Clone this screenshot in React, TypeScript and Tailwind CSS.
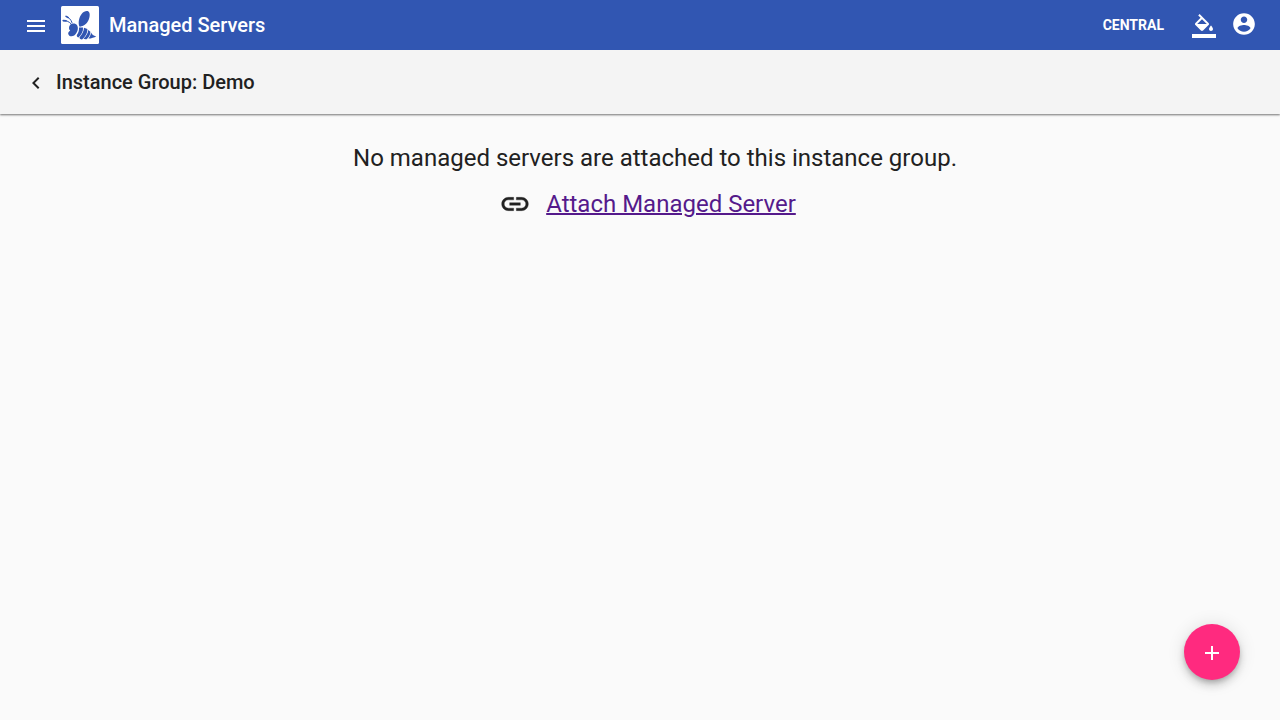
import type { ReactNode } from "react";

function Icon({ className, children }: { className: string; children: ReactNode }) {
  return (
    <svg viewBox="0 0 24 24" fill="currentColor" aria-hidden="true" className={className}>
      {children}
    </svg>
  );
}

function BeeLogo() {
  return (
    <svg viewBox="0 0 38 38" role="img" aria-label="Logo" className="size-[38px] shrink-0">
      <rect width="38" height="38" rx="1.5" fill="#fff" />
      <g fill="#3156b2">
        <path d="M18.4 20.6C17 17 17.8 11.4 20.8 7.8C23 5 26.8 4 28.1 6.2C29.5 8.8 28.4 14 25.3 17.6C23.3 19.8 20.4 20.8 18.4 20.6Z" />
        <path d="M9.2 18.8C11 17 14.8 17.2 16.2 19.6C17.8 22.4 16.4 27.2 13.2 29.6C10.8 31 7.6 30.4 7.2 27.8C7.1 26.4 8 25.4 9.2 24.8C7.6 23.4 7.6 20.6 9.2 18.8Z" />
        <path d="M18 21.6L22 21.6C22.4 25 20.6 29 17.4 31.4C15.8 31 15.4 29.8 16 28.8C17.6 26.6 18.300 24 18 21.6Z" />
        <path d="M23 21.8L26.400 23C26.500 27 24.400 31 21 33.400C19.200 33.200 18.200 32.200 18.600 31.200C21.200 28.600 22.900 25.400 23 21.8Z" />
        <path d="M27.200 24L29.400 25.800C29.400 29 27.800 31.600 25.600 33.200C24.200 33.400 23 33.200 22.600 32.600C25.200 30 27 27.400 27.200 24Z" />
        <path d="M30 26.600C30.800 28.600 32.600 29.800 35.200 30.400C33.400 31.200 30.400 32.400 27.400 32.600C28.800 31 29.800 29 30 26.600Z" />
      </g>
      <g fill="none" stroke="#3156b2" strokeWidth="1" strokeLinecap="round">
        <path d="M2.4 14.6C5.6 14.4 8.4 15.8 10.2 18" />
        <path d="M5.2 10.4C8 11.4 10 13.6 11 16.6" />
      </g>
      <path d="M2.2 14.6L5 14.9M5.1 10.4L7.2 11.6" stroke="#3156b2" strokeWidth="1.6" strokeLinecap="round" />
    </svg>
  );
}

export default function App() {
  return (
    <div className="flex min-h-screen flex-col bg-[#fafafa] font-[Roboto,sans-serif] text-[#212121]">
      <header className="flex h-[50px] items-center bg-[#3156b2] px-6 text-white">
        <button type="button" aria-label="Menu" className="mr-[13px]">
          <Icon className="mt-0.5 size-6">
            <path d="M3 18h18v-2H3v2zm0-5h18v-2H3v2zm0-7v2h18V6H3z" />
          </Icon>
        </button>
        <BeeLogo />
        <h1 className="ml-[10px] text-xl font-medium">Managed Servers</h1>
        <div className="ml-auto flex items-center">
          <span className="mr-7 text-sm font-bold">CENTRAL</span>
          <button type="button" aria-label="Theme" className="mr-[15px]">
            <Icon className="mt-0.5 size-6">
              <path d="M16.56 8.94L7.62 0 6.21 1.41l2.38 2.38-5.15 5.15c-.59.59-.59 1.54 0 2.12l5.5 5.5c.29.29.68.44 1.06.44s.77-.15 1.06-.44l5.5-5.5c.59-.58.59-1.53 0-2.12zM5.21 10L10 5.21 14.79 10H5.21zM19 11.5s-2 2.17-2 3.5c0 1.1.9 2 2 2s2-.9 2-2c0-1.33-2-3.5-2-3.5zM0 20h24v4H0v-4z" />
            </Icon>
          </button>
          <button type="button" aria-label="Account" className="-mr-px">
            <Icon className="mb-0.5 size-[26px]">
              <path d="M12 2C6.48 2 2 6.48 2 12s4.48 10 10 10 10-4.48 10-10S17.52 2 12 2zm0 3c1.66 0 3 1.34 3 3s-1.34 3-3 3-3-1.34-3-3 1.34-3 3-3zm0 14.2c-2.5 0-4.71-1.28-6-3.22.03-1.99 4-3.08 6-3.08 1.99 0 5.97 1.09 6 3.08-1.29 1.94-3.5 3.22-6 3.22z" />
            </Icon>
          </button>
        </div>
      </header>

      <div className="flex h-16 items-center gap-2 bg-[#f4f4f4] px-6 shadow-[0_1px_2px_rgba(0,0,0,0.55)] [clip-path:inset(0_0_-4px_0)]">
        <button type="button" aria-label="Back">
          <Icon className="mt-0.5 size-6">
            <path d="M15.41 7.41L14 6l-6 6 6 6 1.41-1.41L10.83 12z" />
          </Icon>
        </button>
        <h2 className="text-xl font-medium">Instance Group: Demo</h2>
      </div>

      <main className="flex flex-1 flex-col items-center gap-[14px] pt-7 pl-[30px] text-2xl">
        <p>No managed servers are attached to this instance group.</p>
        <div className="flex items-center gap-[15px] pr-[15px]">
          <Icon className="size-8">
            <path
              d="M3.9 12c0-1.71 1.39-3.1 3.1-3.1h4V7H7c-2.76 0-5 2.24-5 5s2.24 5 5 5h4v-1.9H7c-1.71 0-3.1-1.39-3.1-3.1zM8 13h8v-2H8v2zm9-6h-4v1.9h4c1.71 0 3.1 1.39 3.1 3.1s-1.39 3.1-3.1 3.1h-4V17h4c2.76 0 5-2.24 5-5s-2.24-5-5-5z"
              stroke="currentColor"
              strokeWidth="0.25"
            />
          </Icon>
          <a href="#attach" className="text-[#551a8b] underline decoration-2">
            Attach Managed Server
          </a>
        </div>
      </main>

      <button
        type="button"
        aria-label="Add"
        className="fixed right-10 bottom-10 flex size-14 items-center justify-center rounded-full bg-[#ff2a7f] text-white shadow-[0_3px_5px_-1px_rgba(0,0,0,0.2),0_6px_10px_0_rgba(0,0,0,0.14),0_1px_18px_0_rgba(0,0,0,0.12)]"
      >
        <Icon className="mt-0.5 size-6">
          <path d="M19 13h-6v6h-2v-6H5v-2h6V5h2v6h6v2z" />
        </Icon>
      </button>
    </div>
  );
}
